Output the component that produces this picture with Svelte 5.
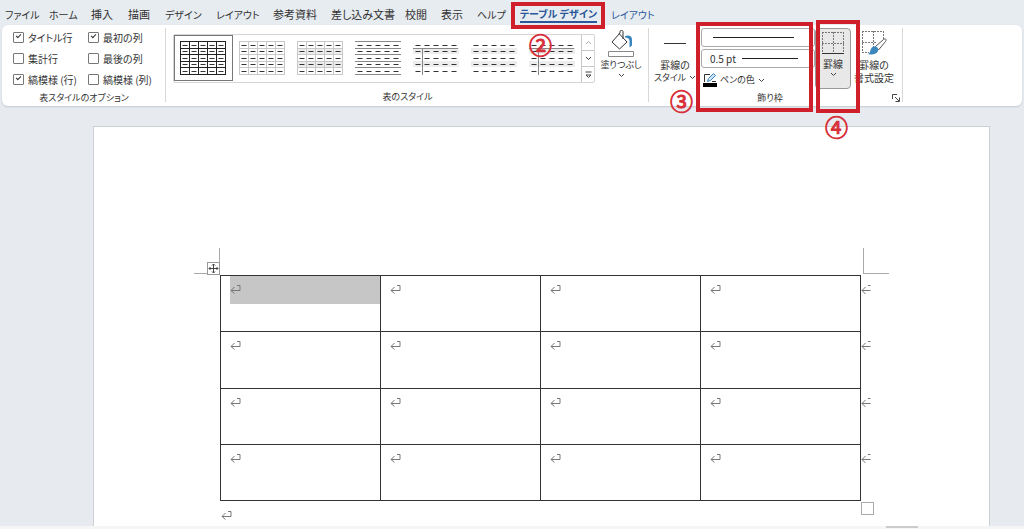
<script>
    let tabs = [
        { name: 'ファイル', kana: true },
        { name: 'ホーム', kana: true },
        { name: '挿入' },
        { name: '描画' },
        { name: 'デザイン', kana: true },
        { name: 'レイアウト', kana: true },
        { name: '参考資料' },
        { name: '差し込み文書' },
        { name: '校閲' },
        { name: '表示' },
        { name: 'ヘルプ', kana: true },
        { name: 'テーブル デザイン', kana: true, context: true },
        { name: 'レイアウト', kana: true, context: true }
    ];
    let activeTab = 11;

    let options = [
        { id: 'header', name: 'タイトル行', checked: true },
        { id: 'first', name: '最初の列', checked: true },
        { id: 'total', name: '集計行', checked: false },
        { id: 'last', name: '最後の列', checked: false },
        { id: 'bandrow', name: '縞模様 (行)', checked: true },
        { id: 'bandcol', name: '縞模様 (列)', checked: false }
    ];

    let tableStyles = ['grid', 'light', 'shaded', 'lines', 'header', 'plain', 'header'];
    let selected = 0;

    let edges = [0, 7, 13, 20, 26, 33];
    let middles = [4, 10, 17, 23, 30];
    let columns = [0, 1, 2, 3, 4];

    let rows = [0, 1, 2, 3];
    let cols = [0, 1, 2, 3];
    let widths = ['0.5 pt', '1 pt', '1.5 pt'];
</script>

{#snippet chevron()}
    <svg class="chevron" width="7" height="5" viewBox="0 0 7 5"><path d="M1 1l2.5 2.5L6 1" /></svg>
{/snippet}

{#snippet mark()}
    <svg class="mark" width="11" height="9" viewBox="0 0 11 9"><path d="M7 .5h3v5H1M4.500 2L1 5.500l3.500 3" /></svg>
{/snippet}

<div class="app">
    <nav class="tabs">
        {#each tabs as tab, i}
            <button class="tab" class:kana={tab.kana} class:context={tab.context} class:active={i === activeTab} on:click={() => (activeTab = i)}>
                <span>{tab.name}</span>
                {#if i === 11}
                    <i class="frame"></i>
                    <b class="step two">②</b>
                {/if}
            </button>
        {/each}
    </nav>

    <div class="ribbon">
        <section class="group optionGroup">
            <div class="options">
                {#each options as option}
                    <label for={option.id}><input type="checkbox" id={option.id} bind:checked={option.checked} />{option.name}</label>
                {/each}
            </div>
            <h2>表スタイルのオプション</h2>
        </section>

        <section class="group styleGroup">
            <div class="body">
                <div class="gallery">
                    {#each tableStyles as kind, i}
                        <button class="style" class:selected={i === selected} aria-label={'表のスタイル ' + (i + 1)} on:click={() => (selected = i)}>
                            <svg class={'thumb ' + kind} width="46" height="34" viewBox="0 0 46 34">
                                {#if kind !== 'grid' && kind !== 'light' && kind !== 'lines'}
                                    <path class="band" d="M0 7h46v6H0zM0 20h46v6H0z" />
                                {/if}
                                {#if kind === 'grid' || kind === 'light' || kind === 'shaded' || kind === 'lines'}
                                    {#each edges as y}
                                        <path class="rule" d="M0 {y + 0.5}h46" />
                                    {/each}
                                {/if}
                                {#if kind === 'grid' || kind === 'light' || kind === 'shaded'}
                                    {#each [0, 9, 18, 27, 36, 45] as x}
                                        <path class="rule" d="M{x + 0.5} 0v34" />
                                    {/each}
                                {/if}
                                {#if kind === 'header'}
                                    <path class="rule" d="M0 7.500h45M9.500 7v27" />
                                {/if}
                                {#each middles as y}
                                    {#each columns as x}
                                        <path class="dash" d="M{x * 9 + 2.5} {y + 0.5}h5" />
                                    {/each}
                                {/each}
                            </svg>
                        </button>
                    {/each}
                    <div class="scroll">
                        <button class="dim" aria-label="上へ"><svg width="7" height="5" viewBox="0 0 7 5"><path d="M1 4l2.500-2.500L6 4" /></svg></button>
                        <button aria-label="下へ">{@render chevron()}</button>
                        <button aria-label="その他"><svg width="7" height="8" viewBox="0 0 7 8"><path d="M.5 1h6M1 4l2.500 2.500L6 4z" /></svg></button>
                    </div>
                </div>
                <button class="big fill">
                    <svg class="icon" width="28" height="28" viewBox="0 0 28 28">
                        <path class="outline" d="M12 3.500l8 8.500-7.500 7L5 12l8-9V1.500c0-1.500 3-1.500 3 0V9" />
                        <path class="blue" d="M18 6c4-1.500 7 0 7 3.500v6l-2.500 2v-7c-.5-2-2-3-4.500-3z" />
                        <path class="swatch" d="M1.500 21.500h25v5h-25z" />
                    </svg>
                    <span class="small">塗りつぶし</span>
                    {@render chevron()}
                </button>
            </div>
            <h2>表のスタイル</h2>
        </section>

        <section class="group borderGroup">
            <div class="body">
                <button class="big">
                    <svg class="icon" width="22" height="28" viewBox="0 0 22 28"><path class="line" d="M0 13.500h22" /></svg>
                    <span>罫線の</span>
                    <span class="small">スタイル {@render chevron()}</span>
                </button>
                <div class="pens">
                    <div class="picker long">
                        <select aria-label="ペンのスタイル"><option></option></select>
                        <i></i>
                    </div>
                    <div class="picker">
                        <select aria-label="ペンの太さ">
                            {#each widths as width}
                                <option>{width}</option>
                            {/each}
                        </select>
                        <i></i>
                    </div>
                    <button class="penColor">
                        <svg width="14" height="14" viewBox="0 0 14 14">
                            <path class="outline" d="M7 1.500H1.500V9M9 8.500h4" />
                            <path class="pen" d="M4.500 8.500l1-3 5-5 2 2-5 5z" />
                            <path class="ink" d="M0 10h14v4H0z" />
                        </svg>
                        ペンの色
                        {@render chevron()}
                    </button>
                    <i class="frame"></i>
                    <b class="step three">③</b>
                </div>
                <button class="big borders">
                    <svg class="icon" width="24" height="24" viewBox="0 0 24 24">
                        <path class="dotted" d="M1 1.500h22M1.500 1v21M22.500 1v21M12.500 1v21M1 12.500h22" />
                        <path class="line" d="M1 22.500h22" />
                    </svg>
                    <span>罫線</span>
                    {@render chevron()}
                    <i class="frame"></i>
                    <b class="step four">④</b>
                </button>
                <button class="big painter">
                    <svg class="icon" width="26" height="26" viewBox="0 0 26 26">
                        <path class="dotted" d="M1 1.500h22M1.500 1v22M22.500 1v8M12.500 1v16M1 12.500h14M1 22.500h7" />
                        <path class="brush" d="M14.500 16.500L22.500 9.500c2-1.500 3.500 0 2 2L17.500 20z" />
                        <path class="blue" d="M13 16.500c3-.5 5 2 4 4.500-1 3-6 4.500-10 3 2-1 2-2 2.500-4 .5-2 2-3.300 3.500-3.500z" />
                    </svg>
                    <span>罫線の</span>
                    <span>書式設定</span>
                </button>
            </div>
            <h2>飾り枠</h2>
            <button class="launcher" aria-label="線種とページ罫線と網かけの設定">
                <svg width="8" height="8" viewBox="0 0 8 8"><path d="M.5 5V.5H5M3 3l4 4M7.500 3.500v4h-4" /></svg>
            </button>
        </section>
    </div>

    <main>
        <article class="page">
            <div class="sheet">
                <i class="corner left"></i>
                <i class="corner right"></i>
                <button class="move" aria-label="表の移動">
                    <svg width="11" height="11" viewBox="0 0 11 11"><path d="M5.500 1v9M1 5.500h9M4 2.500L5.500 1 7 2.500M4 8.500L5.500 10 7 8.500M2.500 4L1 5.500 2.500 7M8.500 4L10 5.500 8.500 7" /></svg>
                </button>
                <table>
                    <tbody>
                        {#each rows as row}
                            <tr>
                                {#each cols as col}
                                    <td>
                                        <div class="para" class:highlight={row === 0 && col === 0}>{@render mark()}</div>
                                        {#if col === 3}
                                            <svg class="rowEnd" width="10" height="10" viewBox="0 0 10 10"><path d="M7 .5h2.500M9.500 5.500H1M4.500 2L1 5.500 4.500 9" /></svg>
                                        {/if}
                                    </td>
                                {/each}
                            </tr>
                        {/each}
                    </tbody>
                </table>
                <i class="handle"></i>
                <div class="after">{@render mark()}</div>
            </div>
        </article>
    </main>
    <footer><i></i></footer>
</div>

<style>
    :global(body) {
        margin: 0;
        background: #e7ebf0;
    }

    .app {
        min-height: 100vh;
        display: flex;
        flex-direction: column;
        overflow: hidden;
        color: #333;
        font-family: "Noto Sans CJK JP", sans-serif;
        font-feature-settings: "palt";
        font-size: 11px;
        line-height: 12px;
    }

    button {
        position: relative;
        padding: 0;
        border: none;
        background: none;
        color: inherit;
        font: inherit;
        font-feature-settings: inherit;
        white-space: nowrap;
        cursor: pointer;
    }

    svg {
        display: block;
        flex: none;
        fill: none;
        stroke: #444;
    }

    .tabs {
        display: grid;
        grid-template-columns: 44px 42px 37px 37px 51px 57px 58px 74px 36px 36px 43px 91px auto;
        height: 25px;
        padding-left: 5px;
        justify-content: start;
        background: #e7ecf1;
    }

    .tab {
        padding-top: 3px;
        text-align: left;
    }

    .tab span {
        display: inline-block;
        height: 15px;
        line-height: 15px;
    }

    .kana {
        font-size: 10px;
    }

    .context {
        color: #2b579a;
    }

    .active {
        font-weight: 700;
    }

    .active span {
        border-bottom: 2px solid #2b579a;
    }

    .frame {
        position: absolute;
        z-index: 2;
        border: 4px solid #cf1f2b;
        pointer-events: none;
    }

    .tab .frame {
        top: 2px;
        left: -9px;
        right: 6px;
        height: 19px;
    }

    .step {
        position: absolute;
        z-index: 3;
        color: #d8303a;
        font-size: 23px;
        line-height: 24px;
        font-weight: 400;
        -webkit-text-stroke: 1px #d8303a;
    }

    .two {
        top: 32px;
        left: 9px;
    }

    .ribbon {
        display: flex;
        height: 81px;
        margin: 0 2px;
        border-radius: 6px;
        background: #fff;
        box-shadow: 0 1px 2px #c5cad0;
    }

    .group {
        position: relative;
        display: flex;
        flex-direction: column;
        box-sizing: border-box;
        padding-top: 3px;
    }

    .group::after {
        content: "";
        position: absolute;
        top: 3px;
        right: 0;
        bottom: 4px;
        border-right: 1px solid #d8d8d8;
    }

    .optionGroup {
        width: 164px;
    }

    .styleGroup {
        width: 483px;
    }

    .borderGroup {
        width: 254px;
    }

    h2 {
        margin: auto 0 1px;
        font-size: 9px;
        line-height: 16px;
        font-weight: 400;
        text-align: center;
    }

    .borderGroup h2 {
        padding-right: 12px;
    }

    .options {
        display: grid;
        grid-template-columns: 75px auto;
        grid-auto-rows: 21px;
        padding-left: 11px;
        margin-top: -1px;
        font-size: 10px;
        white-space: nowrap;
    }

    .options label {
        display: flex;
        align-items: center;
        gap: 4px;
    }

    input {
        position: relative;
        appearance: none;
        box-sizing: border-box;
        width: 11px;
        height: 11px;
        margin: 0;
        border: 1px solid #777;
        border-radius: 1px;
        background: #fff;
    }

    input:checked::after {
        content: "";
        position: absolute;
        top: 1px;
        left: 2px;
        width: 4px;
        height: 2px;
        border-left: 1px solid #333;
        border-bottom: 1px solid #333;
        transform: rotate(-45deg);
    }

    .body {
        display: flex;
        align-items: flex-start;
    }

    .gallery {
        display: flex;
        box-sizing: border-box;
        height: 49px;
        margin: 6px 0 0 7px;
        border: 1px solid #d5d5d5;
        border-radius: 2px;
    }

    .style {
        box-sizing: border-box;
        width: 59px;
        height: 46px;
        padding: 5px;
        border: 1px solid transparent;
    }

    .style:nth-child(n + 2) {
        width: 58px;
    }

    .selected {
        border-color: #777;
    }

    .rule {
        stroke: #888;
    }

    .grid .rule {
        stroke: #222;
    }

    .dash {
        stroke: #333;
    }

    .light .rule,
    .shaded .rule {
        stroke: #c8c8c8;
    }

    .band {
        fill: #ededed;
        stroke: none;
    }

    .scroll {
        display: flex;
        flex-direction: column;
        width: 12px;
        border-left: 1px solid #c8c8c8;
    }

    .scroll button {
        flex: 1;
        display: flex;
        align-items: center;
        justify-content: center;
    }

    .scroll button + button {
        border-top: 1px solid #c8c8c8;
    }

    .dim svg {
        stroke: #aaa;
    }

    .big {
        display: flex;
        flex-direction: column;
        align-items: center;
        box-sizing: border-box;
        width: 44px;
        height: 60px;
        padding-top: 2px;
        font-size: 10px;
    }

    .big > .chevron {
        margin-top: 2px;
    }

    .big span {
        display: flex;
        align-items: center;
        gap: 3px;
        line-height: 13px;
    }

    .big .small {
        font-size: 9px;
    }

    .fill {
        margin-left: 4px;
    }

    .outline,
    .line {
        stroke: #333;
    }

    .swatch {
        fill: #fff;
        stroke: #888;
    }

    .blue {
        fill: #3b87bd;
        stroke: none;
    }

    .brush {
        fill: #fff;
        stroke: #555;
    }

    .dotted {
        stroke: #777;
        stroke-dasharray: 2 1;
    }

    .borderGroup .body {
        padding-left: 4px;
    }

    .pens {
        position: relative;
        display: flex;
        flex-direction: column;
        gap: 2px;
        width: 114px;
        margin-left: 4px;
    }

    .pens > .frame {
        top: -6px;
        left: -5px;
        right: 2px;
        bottom: -22px;
    }

    .three {
        top: 60px;
        left: -31px;
    }

    .picker {
        display: flex;
        align-items: center;
        box-sizing: border-box;
        height: 19px;
        border: 1px solid #aaa;
        border-radius: 3px;
    }

    select {
        appearance: none;
        flex: 1;
        min-width: 0;
        height: 17px;
        padding: 0 0 0 8px;
        border: none;
        background: none;
        color: inherit;
        font-family: inherit;
        font-size: 10px;
    }

    .picker i {
        width: 56px;
        margin-right: 16px;
        border-top: 1px solid #222;
    }

    .long i {
        width: 81px;
        margin-right: 20px;
    }

    .penColor {
        display: flex;
        align-items: center;
        gap: 3px;
        height: 20px;
        padding-left: 2px;
        font-size: 9px;
    }

    .pen {
        fill: #cfe3f2;
        stroke: #3b87bd;
    }

    .ink {
        fill: #000;
        stroke: none;
    }

    .borders {
        width: 36px;
        height: 61px;
        border: 1px solid #999;
        border-radius: 4px;
        background: #e8e8e8;
    }

    .borders .icon {
        margin-bottom: 2px;
    }

    .borders > .frame {
        top: -9px;
        left: 0;
        right: -10px;
        bottom: -25px;
    }

    .four {
        top: 85px;
        left: 9px;
    }

    .painter {
        width: 46px;
    }

    .painter .icon {
        margin-bottom: 2px;
    }

    .launcher {
        position: absolute;
        right: 3px;
        bottom: 4px;
    }

    main {
        flex: 1;
        display: flex;
        padding: 20px 34px 0 93px;
    }

    .page {
        flex: 1;
        box-sizing: border-box;
        padding: 148px 128px 0 126px;
        border: 1px solid #ccd0d4;
        border-bottom: none;
        background: #fff;
    }

    .sheet {
        position: relative;
    }

    .corner {
        position: absolute;
        top: -27px;
        width: 25px;
        height: 25px;
        border-bottom: 1px solid #aaa;
    }

    .left {
        left: -26px;
        border-right: 1px solid #aaa;
    }

    .right {
        left: calc(100% + 2px);
        border-left: 1px solid #aaa;
    }

    .move {
        position: absolute;
        top: -13px;
        left: -13px;
        border: 1px solid #999;
        background: #fff;
    }

    table {
        width: 100%;
        height: 226px;
        table-layout: fixed;
        border-collapse: collapse;
    }

    td {
        position: relative;
        box-sizing: border-box;
        height: 56px;
        padding: 0 0 0 9px;
        border: 1px solid #333;
        vertical-align: top;
    }

    .para {
        box-sizing: border-box;
        height: 28px;
        padding-top: 9px;
    }

    .highlight {
        background: #c6c6c6;
    }

    .mark,
    .rowEnd {
        stroke: #777;
    }

    .rowEnd {
        position: absolute;
        top: 9px;
        left: calc(100% + 1px);
    }

    .handle {
        position: absolute;
        left: 100%;
        bottom: 10px;
        width: 11px;
        height: 11px;
        border: 1px solid #aaa;
    }

    .after {
        padding: 10px 0 5px 1px;
    }

    footer {
        display: flex;
        justify-content: flex-end;
        height: 3px;
        padding-right: 106px;
        background: #f5f5f5;
    }

    footer i {
        width: 32px;
        height: 2px;
        background: #ccc;
    }
</style>
